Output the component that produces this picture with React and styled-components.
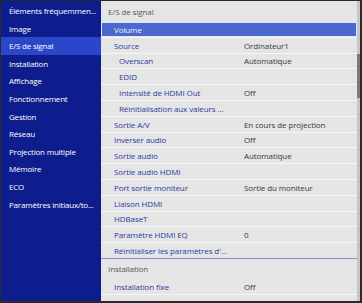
import React from "react";
import styled, { createGlobalStyle } from "styled-components";

const GlobalStyle = createGlobalStyle`
  html, body { margin: 0; padding: 0; background: #262626; }
  body { font-family: "Open Sans", "Noto Sans", sans-serif; }
  * { box-sizing: border-box; }
`;

const Frame = styled.div`
  width: 362px;
  height: 303px;
  display: flex;
  overflow: hidden;
  border: 1px solid #2a2a2a;
  border-right-width: 2px;
  border-bottom-width: 2px;
  background: #2a2a2a;
`;

const Sidebar = styled.nav`
  width: 100px;
  flex: none;
  background: #0e1d8d;
  padding-top: 1px;
  display: flex;
  flex-direction: column;
`;

const NavItem = styled.div`
  height: 17.6px;
  line-height: 17.6px;
  padding-left: 8px;
  font-size: 8px;
  letter-spacing: -0.2px;
  color: #ffffff;
  white-space: nowrap;
  background: ${(p) => (p.$active ? "#2b47c9" : "transparent")};
`;

const Main = styled.main`
  flex: 1;
  min-width: 0;
  background: #e5e5e5;
  padding-top: 1px;
  display: flex;
  flex-direction: column;
  overflow: hidden;
`;

const SectionHeader = styled.div`
  flex: none;
  height: 20px;
  line-height: 20px;
  padding-left: 7px;
  font-size: 8px;
  letter-spacing: -0.1px;
  color: #565656;
`;

const Row = styled.div`
  flex: none;
  height: 15.8px;
  display: grid;
  grid-template-columns: ${(p) => (p.$sub ? "125px" : "130px")} 1fr;
  align-items: center;
  padding-left: ${(p) => (p.$sub ? "18px" : "13px")};
  font-size: 8px;
  letter-spacing: -0.1px;
  white-space: nowrap;
  border-bottom: 1px solid ${(p) => (p.$last ? "#8a90c6" : "#f6f6f6")};
  background: ${(p) => (p.$selected ? "#4a68cd" : "transparent")};
  box-shadow: ${(p) => (p.$selected ? "inset 0 0 0 1px #dfe5fb" : "none")};
`;

const Label = styled.span`
  color: ${(p) => (p.$selected ? "#f2f4ff" : "#2c3ca2")};
`;

const Value = styled.span`
  color: #3a3a3a;
`;

const Scrollbar = styled.div`
  width: 3px;
  flex: none;
  background: #c6c6c6;
  display: flex;
  flex-direction: column;
`;

const ScrollSpacer = styled.div`
  height: 53px;
  flex: none;
`;

const Thumb = styled.div`
  height: 44px;
  flex: none;
  background: #7b7b7b;
`;

const nav = [
  "Éléments fréquemmen...",
  "Image",
  "E/S de signal",
  "Installation",
  "Affichage",
  "Fonctionnement",
  "Gestion",
  "Réseau",
  "Projection multiple",
  "Mémoire",
  "ECO",
  "Paramètres initiaux/to...",
];

const signalRows = [
  { label: "Volume", selected: true },
  { label: "Source", value: "Ordinateur1" },
  { label: "Overscan", value: "Automatique", sub: true },
  { label: "EDID", sub: true },
  { label: "Intensité de HDMI Out", value: "Off", sub: true },
  { label: "Réinitialisation aux valeurs ...", sub: true },
  { label: "Sortie A/V", value: "En cours de projection" },
  { label: "Inverser audio", value: "Off" },
  { label: "Sortie audio", value: "Automatique" },
  { label: "Sortie audio HDMI" },
  { label: "Port sortie moniteur", value: "Sortie du moniteur" },
  { label: "Liaison HDMI" },
  { label: "HDBaseT" },
  { label: "Paramètre HDMI EQ", value: "0" },
  { label: "Réinitialiser les paramètres d'...", last: true },
];

const installRows = [
  { label: "Installation fixe", value: "Off" },
  { label: "Lien" },
];

function MenuRow({ r }) {
  return (
    <Row $sub={r.sub} $selected={r.selected} $last={r.last}>
      <Label $selected={r.selected}>{r.label}</Label>
      <Value>{r.value || ""}</Value>
    </Row>
  );
}

export default function App() {
  return (
    <>
      <GlobalStyle />
      <Frame>
        <Sidebar>
          {nav.map((n) => (
            <NavItem key={n} $active={n === "E/S de signal"}>
              {n}
            </NavItem>
          ))}
        </Sidebar>
        <Main>
          <SectionHeader>E/S de signal</SectionHeader>
          {signalRows.map((r) => (
            <MenuRow key={r.label} r={r} />
          ))}
          <SectionHeader>Installation</SectionHeader>
          {installRows.map((r) => (
            <MenuRow key={r.label} r={r} />
          ))}
        </Main>
        <Scrollbar>
          <ScrollSpacer />
          <Thumb />
        </Scrollbar>
      </Frame>
    </>
  );
}
